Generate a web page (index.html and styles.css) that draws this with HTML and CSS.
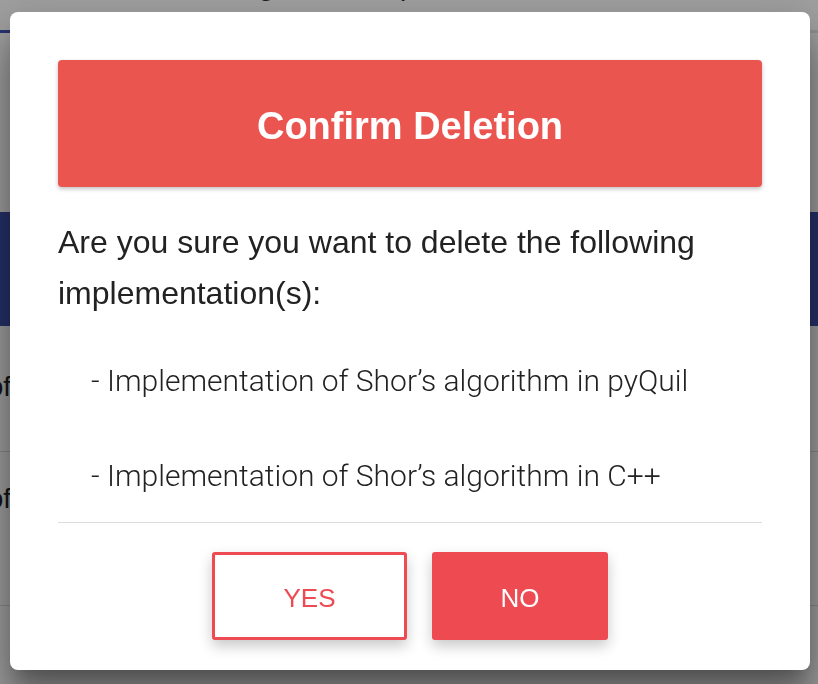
FILE: index.html
```html
<!DOCTYPE html>
<html lang="en">
<head>
<meta charset="utf-8">
<title>Confirm Deletion</title>
<link rel="stylesheet" href="styles.css">
</head>
<body>
<div class="page">
  <div class="topbar"><span class="topbar-text">Algorithm Implementations</span></div>
  <div class="tabline"><div class="tab-active"></div></div>
  <div class="spacer"></div>
  <div class="table-head"></div>
  <div class="row row-first"><div class="cell"><span>Implementation of</span></div></div>
  <div class="row row-second"><div class="cell"><span>Implementation of</span></div></div>
</div>
<div class="backdrop"></div>
<div class="dialog" role="dialog">
  <h1 class="dialog-title">Confirm Deletion</h1>
  <p class="dialog-text">Are you sure you want to delete the following implementation(s):</p>
  <ul class="item-list">
    <li>- Implementation of Shor’s algorithm in pyQuil</li>
    <li>- Implementation of Shor’s algorithm in C++</li>
  </ul>
  <div class="dialog-actions">
    <button class="btn btn-yes">YES</button>
    <button class="btn btn-no">NO</button>
  </div>
</div>
</body>
</html>
```

FILE: styles.css
```css
html, body {
  margin: 0;
  padding: 0;
  height: 100%;
  overflow: hidden;
}
body {
  background: #ffffff;
  font-family: "Liberation Sans", Arial, sans-serif;
}
.page {
  display: flex;
  flex-direction: column;
}
.topbar {
  height: 30px;
  display: flex;
  justify-content: center;
}
.topbar-text {
  font-size: 30px;
  line-height: 30px;
  color: #333;
  margin-top: -30px;
  white-space: nowrap;
}
.tabline {
  height: 3px;
  background: #e8e8e8;
}
.tab-active {
  width: 40px;
  height: 3px;
  background: #3f51b5;
}
.spacer {
  height: 179px;
}
.table-head {
  height: 114px;
  background: #3d4fa8;
}
.row {
  border-bottom: 1px solid #dcdcdc;
  display: flex;
  align-items: flex-start;
}
.row-first { height: 125px; }
.row-second { height: 153px; }
.cell {
  width: 11px;
  display: flex;
  justify-content: flex-end;
  font-size: 28px;
  line-height: 32px;
  color: #222;
  white-space: nowrap;
}
.row-first .cell { margin-top: 45px; }
.row-second .cell { margin-top: 31px; }
.backdrop {
  position: fixed;
  inset: 0;
  background: rgba(0, 0, 0, 0.375);
}
.dialog {
  position: fixed;
  left: 10px;
  top: 12px;
  width: 800px;
  box-sizing: border-box;
  padding: 48px 48px 30px;
  background: #ffffff;
  border-radius: 8px;
  box-shadow: 0 11px 15px -7px rgba(0,0,0,.2), 0 34px 38px 3px rgba(0,0,0,.34), 0 9px 46px 8px rgba(0,0,0,.12);
}
.dialog-title {
  margin: 0;
  height: 127px;
  box-sizing: border-box;
  padding-top: 6px;
  display: flex;
  align-items: center;
  justify-content: center;
  background: #eb5550;
  color: #ffffff;
  border-radius: 4px;
  font-size: 38px;
  font-weight: bold;
  box-shadow: 0 2px 4px rgba(0,0,0,.25);
}
.dialog-text {
  margin: 30px 0 0;
  font-size: 32px;
  line-height: 51px;
  color: #222222;
}
.item-list {
  list-style: none;
  margin: 42px 0 0;
  padding: 0 0 26px 33px;
  border-bottom: 1px solid #dddddd;
  display: flex;
  flex-direction: column;
  gap: 55px;
  font-family: Roboto, "Liberation Sans", sans-serif;
  font-weight: 300;
  font-size: 30px;
  line-height: 40px;
  color: #222222;
}
.dialog-actions {
  display: flex;
  justify-content: center;
  gap: 25px;
  margin-top: 29px;
}
.btn {
  height: 88px;
  padding: 4px 0 0;
  border-radius: 3px;
  font-family: "Liberation Sans", Arial, sans-serif;
  font-size: 26px;
  cursor: pointer;
  box-shadow: 0 6px 14px rgba(0,0,0,.22);
}
.btn-yes {
  width: 195px;
  background: #ffffff;
  color: #ee4a51;
  border: 3px solid #ee4a51;
}
.btn-no {
  width: 176px;
  background: #ee4a51;
  color: #ffffff;
  border: none;
}
```
